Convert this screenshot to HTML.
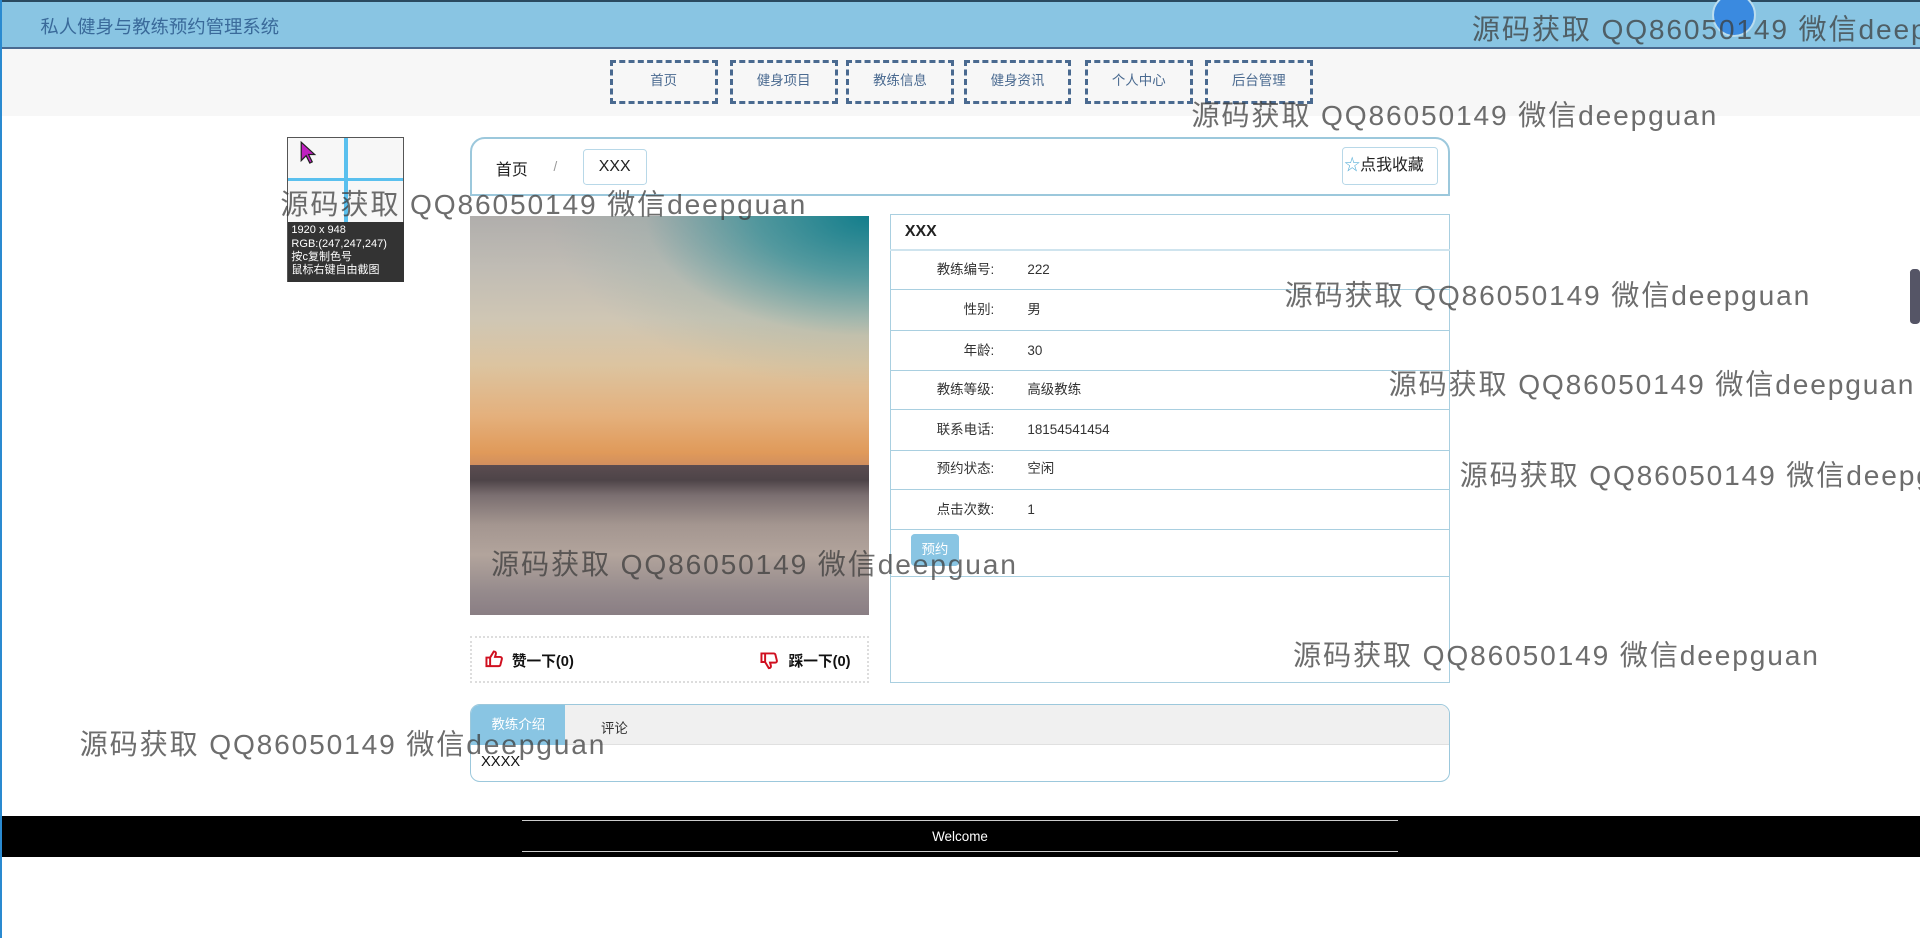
<!DOCTYPE html>
<html><head><meta charset="utf-8"><style>
html{zoom:1.22449}
*{margin:0;padding:0;box-sizing:border-box}
body{width:1568px;height:766px;position:relative;overflow:hidden;background:#fff;font-family:"Liberation Sans","Noto Sans CJK SC",sans-serif;}
.a{position:absolute}
.hdr{left:0;top:0;width:1568px;height:40px;background:#89c5e3;border-top:2px solid #2a4a60;border-bottom:2px solid #4a6a90}
.nav{left:0;top:40px;width:1568px;height:55px;background:#f7f7f7}
.nb{top:49px;height:36px;border:3px dashed #4a6a90;font-size:11px;color:#4a6a90;text-align:center;line-height:30px;background:#f7f7f7}
.wm{color:rgba(60,60,60,.75);font-size:23px;letter-spacing:1.5px;white-space:nowrap}
.row{left:727px;width:457px;border-bottom:1px solid #a9cfe0;height:33px;font-size:11px;color:#333;line-height:32px}
.row .l{position:absolute;right:372px;top:0}
.row .v{position:absolute;left:112px;top:0}
</style></head><body>
<div class="a" style="left:0;top:0;width:2px;height:766px;background:#2a8ad0;z-index:5"></div>
<div class="a hdr"></div>
<div class="a" style="left:33px;top:11px;font-size:15px;color:#3a6a9a">私人健身与教练预约管理系统</div>
<div class="a" style="left:1398px;top:-6px;width:36px;height:36px;border-radius:50%;background:#3a8ae0;border:2px solid #bde"></div>
<div class="a nav"></div>
<div class="a nb" style="left:498px;width:88px">首页</div>
<div class="a nb" style="left:596px;width:88px">健身项目</div>
<div class="a nb" style="left:691px;width:88px">教练信息</div>
<div class="a nb" style="left:787px;width:88px">健身资讯</div>
<div class="a nb" style="left:886px;width:88px">个人中心</div>
<div class="a nb" style="left:984px;width:88px">后台管理</div>

<div class="a" style="left:384px;top:112px;width:800px;height:48px;border:2px solid #9cc8dc;border-radius:12px 12px 0 0"></div>
<div class="a" style="left:405px;top:128px;font-size:13px;color:#222">首页</div>
<div class="a" style="left:452px;top:130px;font-size:11px;color:#999">/</div>
<div class="a" style="left:476px;top:122px;width:52px;height:29px;border:1px solid #b8d8e8;border-radius:3px;font-size:13px;text-align:center;line-height:27px;color:#222">XXX</div>
<div class="a" style="left:1096px;top:120px;width:78px;height:31px;border:1px solid #b8d8e8;border-radius:3px;font-size:13px;line-height:29px;color:#222;padding-left:1px"><span style="color:#5ab0d8">☆</span>点我收藏</div>

<div class="a" style="left:384px;top:176px;width:326px;height:210px;background:linear-gradient(180deg,#b0aeac 0%,#c0bcb4 20%,#cfc6b4 40%,#dcc4a0 58%,#e4b07c 78%,#e09a5a 92%,#c88860 100%)"></div>
<div class="a" style="left:384px;top:176px;width:326px;height:200px;background:radial-gradient(ellipse 80% 70% at 100% 0%,#137e8c 0%,rgba(40,140,150,.7) 35%,rgba(120,170,170,.2) 70%,rgba(0,0,0,0) 100%)"></div>
<div class="a" style="left:384px;top:380px;width:326px;height:122px;background:linear-gradient(180deg,#5a4c50 0%,#4e4448 10%,#7a6e70 20%,#a49690 40%,#b2a49c 60%,#958a8c 85%,#8a7e84 100%)"></div>

<div class="a" style="left:384px;top:519px;width:326px;height:39px;border:2px dotted #ddd"></div>
<svg class="a" style="left:395px;top:530px" width="16" height="16" viewBox="0 0 16 16"><path d="M2 7h3v7H2z M5 7l3-5c1.5 0 2 1 1.6 2.4L9 6.5h4.2c1 0 1.6.8 1.4 1.7l-1.2 4.8c-.2.7-.8 1-1.5 1H5" fill="none" stroke="#d01020" stroke-width="1.6"/></svg>
<div class="a" style="left:418px;top:531px;font-size:12px;font-weight:bold;color:#111">赞一下(0)</div>
<svg class="a" style="left:620px;top:532px" width="16" height="16" viewBox="0 0 16 16"><g transform="translate(0,16) scale(1,-1)"><path d="M2 7h3v7H2z M5 7l3-5c1.5 0 2 1 1.6 2.4L9 6.5h4.2c1 0 1.6.8 1.4 1.7l-1.2 4.8c-.2.7-.8 1-1.5 1H5" fill="none" stroke="#d01020" stroke-width="1.6"/></g></svg>
<div class="a" style="left:644px;top:531px;font-size:12px;font-weight:bold;color:#111">踩一下(0)</div>

<div class="a" style="left:727px;top:175px;width:457px;height:383px;border:1px solid #a9cfe0"></div>
<div class="a" style="left:727px;top:175px;width:457px;height:30px;border-bottom:2px solid #cfe4ee;font-size:13px;font-weight:bold;padding:7px 12px;color:#222">XXX</div>
<div class="a row" style="top:204px"><span class="l">教练编号:</span><span class="v">222</span></div>
<div class="a row" style="top:237px"><span class="l">性别:</span><span class="v">男</span></div>
<div class="a row" style="top:270px"><span class="l">年龄:</span><span class="v">30</span></div>
<div class="a row" style="top:302px"><span class="l">教练等级:</span><span class="v">高级教练</span></div>
<div class="a row" style="top:335px"><span class="l">联系电话:</span><span class="v">18154541454</span></div>
<div class="a row" style="top:367px"><span class="l">预约状态:</span><span class="v">空闲</span></div>
<div class="a row" style="top:400px"><span class="l">点击次数:</span><span class="v">1</span></div>
<div class="a" style="left:727px;top:470px;width:457px;border-top:1px solid #a9cfe0"></div>
<div class="a" style="left:744px;top:436px;width:39px;height:26px;background:#89c5e3;border-radius:3px;color:#fff;font-size:11px;text-align:center;line-height:26px">预约</div>

<div class="a" style="left:384px;top:575px;width:800px;height:64px;border:1px solid #9cc8dc;border-radius:8px;overflow:hidden">
<div style="height:33px;background:#f0f0f0;border-bottom:1px solid #e0e0e0;position:relative">
<div style="position:absolute;left:0;top:0;width:77px;height:33px;background:#89c5e3;color:#fff;font-size:11px;text-align:center;line-height:33px">教练介绍</div>
<div style="position:absolute;left:106px;top:10px;font-size:11px;color:#333">评论</div></div>
<div style="font-size:12px;padding:7px 8px;color:#111">XXXX</div></div>

<div class="a" style="left:2px;top:666px;width:1566px;height:34px;background:#000"></div>
<div class="a" style="left:426px;top:670px;width:716px;border-top:1px solid #ccc"></div>
<div class="a" style="left:426px;top:695px;width:716px;border-top:1px solid #ccc"></div>
<div class="a" style="left:0;top:677px;width:1568px;text-align:center;color:#fff;font-size:11px">Welcome</div>

<div class="a" style="left:234px;top:112px;width:96px;height:118px;border:1px solid #555;background:#f7f7f7"></div>
<div class="a" style="left:281px;top:113px;width:3px;height:68px;background:#5ac0ee"></div>
<div class="a" style="left:235px;top:145px;width:94px;height:3px;background:#5ac0ee"></div>
<svg class="a" style="left:245px;top:115px" width="14" height="20" viewBox="0 0 14 20"><path d="M1 1v15l4-4 3 6 2-1-3-6h5z" fill="#c020c0" stroke="#222" stroke-width="1"/></svg>
<div class="a" style="left:235px;top:181px;width:95px;height:49px;background:#333;color:#fff;font-size:9px;line-height:11px;padding:2px 3px">1920 x 948<br>RGB:(247,247,247)<br>按c复制色号<br>鼠标右键自由截图</div>

<div class="a" style="left:1560px;top:220px;width:8px;height:45px;background:#556;border-radius:3px"></div>

<div class="a wm" style="left:1202px;top:6px">源码获取 QQ86050149 微信deepguan</div>
<div class="a wm" style="left:973px;top:76px">源码获取 QQ86050149 微信deepguan</div>
<div class="a wm" style="left:229px;top:149px">源码获取 QQ86050149 微信deepguan</div>
<div class="a wm" style="left:1049px;top:223px">源码获取 QQ86050149 微信deepguan</div>
<div class="a wm" style="left:1134px;top:296px">源码获取 QQ86050149 微信deepguan</div>
<div class="a wm" style="left:1192px;top:370px">源码获取 QQ86050149 微信deepguan</div>
<div class="a wm" style="left:401px;top:443px">源码获取 QQ86050149 微信deepguan</div>
<div class="a wm" style="left:1056px;top:517px">源码获取 QQ86050149 微信deepguan</div>
<div class="a wm" style="left:65px;top:590px">源码获取 QQ86050149 微信deepguan</div>
</body></html>
